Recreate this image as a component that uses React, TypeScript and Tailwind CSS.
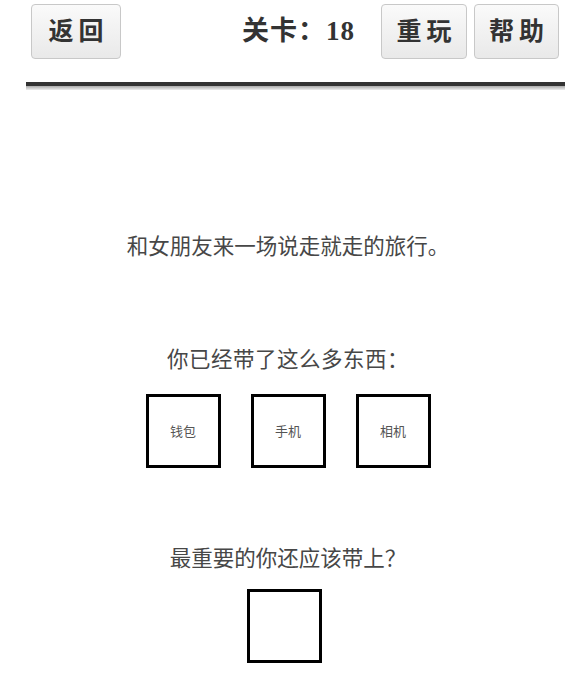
import React from 'react';

const btn =
  'flex items-center justify-center h-[55px] rounded-[4px] border border-[#c8c8c8] bg-gradient-to-b from-[#fafafa] to-[#e9e9e9] text-[25px] font-bold text-[#333] tracking-[5px] pl-[5px]';

function Slot({ label }: { label?: string }) {
  return (
    <div className="w-[75px] h-[74px] border-[3px] border-black flex items-center justify-center text-[13px] text-[#555]">
      {label}
    </div>
  );
}

export default function App() {
  return (
    <div
      className="w-[565px] h-[679px] bg-white overflow-hidden"
      style={{ fontFamily: '"Liberation Serif", "Noto Sans CJK SC", serif' }}
    >
      {/* Top bar */}
      <div className="flex items-start justify-between pt-[4px]">
        <button className={`${btn} w-[90px] ml-[31px]`}>返回</button>
        <div className="flex items-center mr-[6px]">
          <span className="text-[27px] font-bold text-[#333] mr-[26px] tracking-[1px]">关卡：18</span>
          <button className={`${btn} w-[86px]`}>重玩</button>
          <button className={`${btn} w-[85px] ml-[7px]`}>帮助</button>
        </div>
      </div>

      {/* Divider */}
      <div className="ml-[26px] mt-[23px]">
        <div className="h-[4px] bg-[#333]" />
        <div className="h-[4px] bg-gradient-to-b from-[#aaa] to-[#eee]" />
      </div>

      {/* Puzzle content */}
      <div
        className="flex flex-col items-center pl-[11px] text-[21.5px] text-[#474747]"
        style={{ fontFamily: '"Noto Sans CJK SC", sans-serif' }}
      >
        <p className="mt-[140px] leading-[30px]">和女朋友来一场说走就走的旅行。</p>
        <p className="mt-[83px] leading-[30px] tracking-[0.5px]">你已经带了这么多东西：</p>
        <div className="flex gap-[30px] mt-[21px]">
          <Slot label="钱包" />
          <Slot label="手机" />
          <Slot label="相机" />
        </div>
        <p className="mt-[74px] leading-[30px]">最重要的你还应该带上？</p>
        <div className="mt-[17px] -ml-[7px]">
          <Slot />
        </div>
      </div>
    </div>
  );
}
